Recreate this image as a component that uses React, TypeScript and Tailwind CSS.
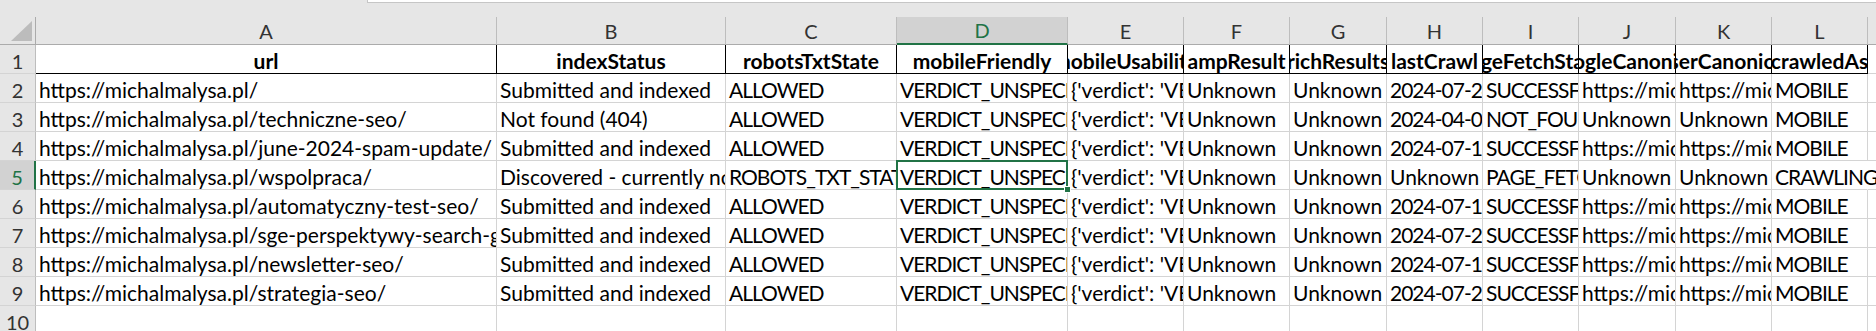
import React from 'react';

const LETTERS = ['A', 'B', 'C', 'D', 'E', 'F', 'G', 'H', 'I', 'J', 'K', 'L'];

const HEADERS = [
  'url',
  'indexStatus',
  'robotsTxtState',
  'mobileFriendly',
  'mobileUsability',
  'ampResult',
  'richResults',
  'lastCrawl',
  'pageFetchState',
  'googleCanonical',
  'userCanonical',
  'crawledAs',
];

const V = 'VERDICT_UNSPECIFIED';
const MU = "{'verdict': 'VERDICT_UNSPECIFIED'}";

const ROWS: string[][] = [
  ['https://michalmalysa.pl/', 'Submitted and indexed', 'ALLOWED', V, MU, 'Unknown', 'Unknown', '2024-07-24T05:11:32Z', 'SUCCESSFUL', 'https://michalmalysa.pl/', 'https://michalmalysa.pl/', 'MOBILE'],
  ['https://michalmalysa.pl/techniczne-seo/', 'Not found (404)', 'ALLOWED', V, MU, 'Unknown', 'Unknown', '2024-04-03T11:40:02Z', 'NOT_FOUND', 'Unknown', 'Unknown', 'MOBILE'],
  ['https://michalmalysa.pl/june-2024-spam-update/', 'Submitted and indexed', 'ALLOWED', V, MU, 'Unknown', 'Unknown', '2024-07-18T09:23:10Z', 'SUCCESSFUL', 'https://michalmalysa.pl/june-2024-spam-update/', 'https://michalmalysa.pl/june-2024-spam-update/', 'MOBILE'],
  ['https://michalmalysa.pl/wspolpraca/', 'Discovered - currently not indexed', 'ROBOTS_TXT_STATE_UNSPECIFIED', V, MU, 'Unknown', 'Unknown', 'Unknown', 'PAGE_FETCH_STATE_UNSPECIFIED', 'Unknown', 'Unknown', 'CRAWLING_USER_AGENT_UNSPECIFIED'],
  ['https://michalmalysa.pl/automatyczny-test-seo/', 'Submitted and indexed', 'ALLOWED', V, MU, 'Unknown', 'Unknown', '2024-07-15T14:02:44Z', 'SUCCESSFUL', 'https://michalmalysa.pl/automatyczny-test-seo/', 'https://michalmalysa.pl/automatyczny-test-seo/', 'MOBILE'],
  ['https://michalmalysa.pl/sge-perspektywy-search-generative-experience/', 'Submitted and indexed', 'ALLOWED', V, MU, 'Unknown', 'Unknown', '2024-07-21T07:51:19Z', 'SUCCESSFUL', 'https://michalmalysa.pl/sge-perspektywy-search-generative-experience/', 'https://michalmalysa.pl/sge-perspektywy-search-generative-experience/', 'MOBILE'],
  ['https://michalmalysa.pl/newsletter-seo/', 'Submitted and indexed', 'ALLOWED', V, MU, 'Unknown', 'Unknown', '2024-07-12T16:30:05Z', 'SUCCESSFUL', 'https://michalmalysa.pl/newsletter-seo/', 'https://michalmalysa.pl/newsletter-seo/', 'MOBILE'],
  ['https://michalmalysa.pl/strategia-seo/', 'Submitted and indexed', 'ALLOWED', V, MU, 'Unknown', 'Unknown', '2024-07-26T10:08:57Z', 'SUCCESSFUL', 'https://michalmalysa.pl/strategia-seo/', 'https://michalmalysa.pl/strategia-seo/', 'MOBILE'],
];

const GRID =
  'grid grid-cols-[36px_461px_229px_171px_171px_116px_106px_97px_96px_96px_97px_96px_96px_1fr]';

// Lato caps and digits run a little wider than Excel's Calibri
const isCaps = (t?: string) => !!t && /^[A-Z0-9_:\-]+$/.test(t);

function RowHead({ n, active }: { n: number; active?: boolean }) {
  return (
    <div
      className={
        'flex h-[29px] items-end justify-center border-b border-[#d4d4d4] text-[20px] ' +
        (active
          ? 'border-r-2 border-r-[#217346] bg-[#d2d2d2] text-[#217346]'
          : 'border-r border-r-[#bdbdbd] bg-[#e6e6e6] text-[#333]')
      }
    >
      {n}
    </div>
  );
}

function Cell({ text, wide, selected }: { text?: string; wide?: boolean; selected?: boolean }) {
  return (
    <div
      className={
        'relative h-[29px] border-b border-r border-[#d4d4d4] ' +
        (wide ? 'z-10 border-r-transparent' : '') +
        (selected ? ' z-20' : '')
      }
    >
      <div
        className={
          'flex h-full items-end whitespace-nowrap pl-[3px] ' +
          (wide ? 'overflow-visible' : 'overflow-hidden') +
          (isCaps(text) ? ' tracking-[-1px]' : '')
        }
      >
        {text}
      </div>
      {selected && (
        <>
          <div className="pointer-events-none absolute -top-px -left-px -right-px -bottom-px border-2 border-[#217346]" />
          <div className="absolute -right-[4px] -bottom-[4px] h-[7px] w-[7px] border border-white bg-[#217346]" />
        </>
      )}
    </div>
  );
}

export default function App() {
  return (
    <div className="h-[331px] w-[1876px] overflow-hidden bg-white font-[family-name:Lato,sans-serif] text-[21px] leading-[1.2] text-black">
      {/* formula bar edge */}
      <div className="flex h-[17px] bg-[#e6e6e6]">
        <div className="w-[367px]" />
        <div className="h-[3px] flex-1 border-b border-l border-[#c6c6c6] bg-white" />
      </div>

      {/* column letters */}
      <div className={GRID + ' h-[28px] bg-[#e6e6e6] text-[20px]'}>
        <div className="flex items-end justify-end border-b border-r border-[#ababab] pb-[2px] pr-[2px]">
          <svg width="22" height="21" viewBox="0 0 22 21">
            <polygon points="21,0 21,20 0,20" fill="#bcbcbc" />
          </svg>
        </div>
        {LETTERS.map((l) => (
          <div
            key={l}
            className={
              'flex items-center justify-center border-r border-[#bdbdbd] ' +
              (l === 'D'
                ? 'border-b-2 border-b-[#217346] bg-[#d2d2d2] text-[#217346]'
                : 'border-b border-b-[#ababab] text-[#333]')
            }
          >
            {l}
          </div>
        ))}
        <div className="border-b border-[#ababab]" />
      </div>

      {/* header row */}
      <div className={GRID}>
        <RowHead n={1} />
        {HEADERS.map((h) => (
          <div
            key={h}
            className="flex h-[29px] items-end justify-center overflow-hidden whitespace-nowrap border-b border-r border-black font-bold"
          >
            <span className="shrink-0">{h}</span>
          </div>
        ))}
        <div className="h-[29px] border-b border-[#d4d4d4]" />
      </div>

      {/* data rows */}
      {ROWS.map((row, i) => (
        <div key={i} className={GRID}>
          <RowHead n={i + 2} active={i === 3} />
          {row.map((t, j) => (
            <Cell key={j} text={t} wide={i === 3 && j === 11} selected={i === 3 && j === 3} />
          ))}
          <div className="h-[29px] border-b border-[#d4d4d4]" />
        </div>
      ))}

      <div className={GRID}>
        <RowHead n={10} />
        {LETTERS.map((l) => (
          <Cell key={l} />
        ))}
        <div className="h-[29px] border-b border-[#d4d4d4]" />
      </div>
    </div>
  );
}
